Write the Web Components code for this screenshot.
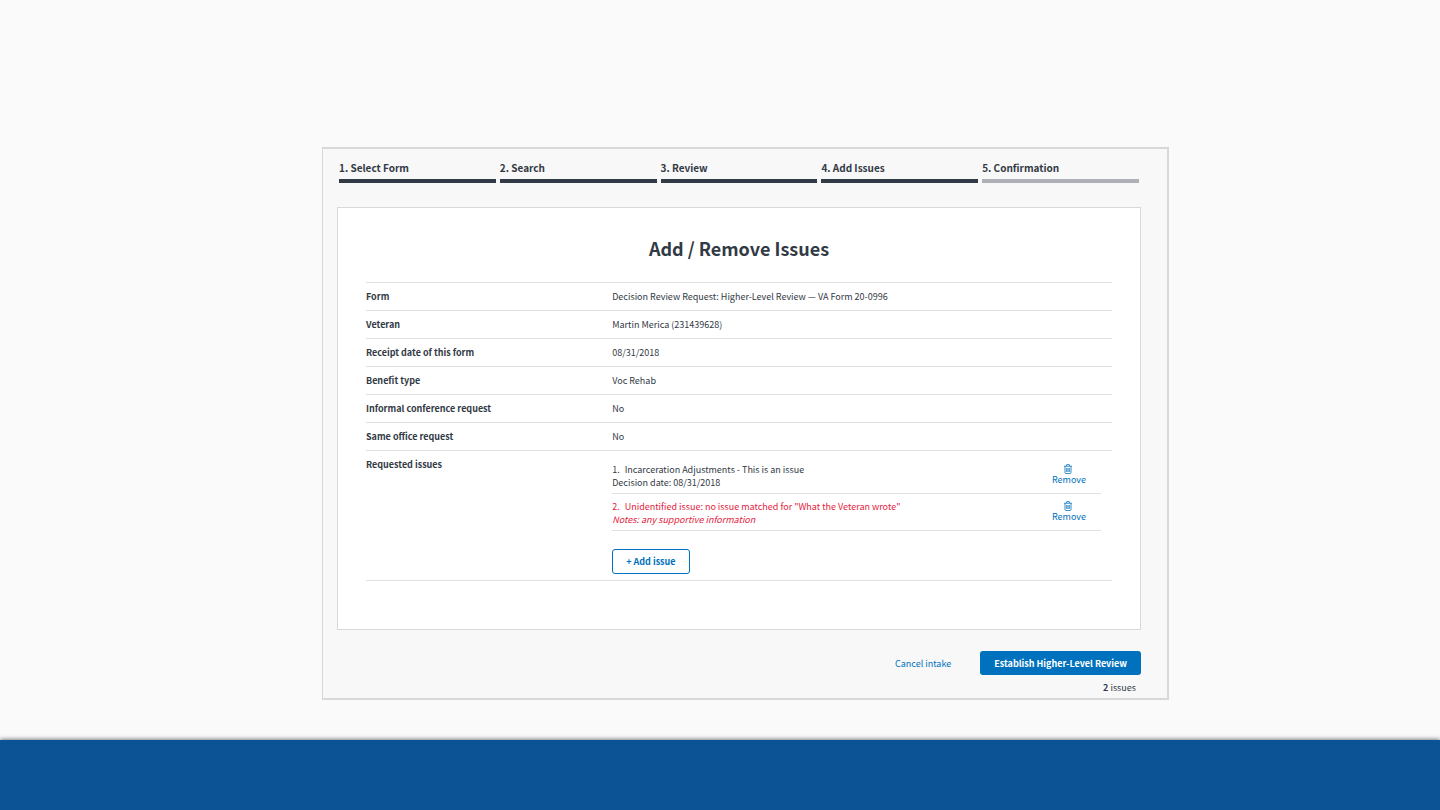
<!DOCTYPE html>
<html lang="en">
<head>
<meta charset="utf-8">
<meta name="viewport" content="width=device-width, initial-scale=1">
<title>Add / Remove Issues</title>
<style>
    body {
        margin: 0;
        background: #fafafa;
        color: #323a45;
        font: 9px/15px "Noto Sans CJK SC", "Open Sans", sans-serif;
        --ink: #323a45;
        --line: #e0e0e0;
        --primary: #0071bc;
        --error: #e31c3d;
    }
</style>
</head>
<body>
<intake-page>
    <intake-steps slot="steps">
        <intake-step done>1. Select Form</intake-step>
        <intake-step done>2. Search</intake-step>
        <intake-step done>3. Review</intake-step>
        <intake-step done>4. Add Issues</intake-step>
        <intake-step>5. Confirmation</intake-step>
    </intake-steps>

    <intake-summary>
        <span slot="title">Add / Remove Issues</span>
        <span slot="form">Decision Review Request: Higher-Level Review — VA Form 20-0996</span>
        <span slot="veteran">Martin Merica (231439628)</span>
        <span slot="receipt">08/31/2018</span>
        <span slot="benefit">Voc Rehab</span>
        <span slot="conference">No</span>
        <span slot="office">No</span>
        <intake-issue slot="issues" number="1">
            Incarceration Adjustments - This is an issue
            <span slot="note">Decision date: 08/31/2018</span>
        </intake-issue>
        <intake-issue slot="issues" number="2" unidentified>
            Unidentified issue: no issue matched for "What the Veteran wrote"
            <span slot="note">Notes: any supportive information</span>
        </intake-issue>
    </intake-summary>

    <intake-actions slot="actions" count="2">Establish Higher-Level Review</intake-actions>
</intake-page>

<script>
(function() {
    class IntakeElement extends HTMLElement {
        constructor() {
            super();
            const template = document.createElement('template');

            template.innerHTML = this.constructor.markup;
            this.attachShadow({ mode: 'open' });
            this.shadowRoot.appendChild(template.content.cloneNode(true));
        }
    }

    class IntakePage extends IntakeElement {
        static get markup() {
            return `
<style>
    :host {
        display: flex;
        flex-direction: column;
        min-height: 100vh;
    }

    main {
        flex: 1;
        display: grid;
        grid-template-columns: 322fr 847fr 271fr;
        align-items: start;
        padding: 147px 0 40px;
    }

    #frame {
        grid-column: 2;
        padding: 11px 26px 3px 14px;
        border: 2px solid #d8d8d8;
        border-left-width: 1px;
        background: #f8f8f8;
    }

    footer {
        height: 70px;
        background: #0c5395;
        box-shadow: 0 -1px 4px rgba(0, 0, 0, .5);
    }
</style>
<main>
    <div id="frame">
        <slot name="steps"></slot>
        <slot></slot>
        <slot name="actions"></slot>
    </div>
</main>
<footer></footer>`;
        }
    }

    class IntakeSteps extends IntakeElement {
        static get markup() {
            return `
<style>
    :host {
        display: block;
        margin: 0 2px 24px;
    }

    nav {
        display: flex;
        gap: 4px;
    }
</style>
<nav aria-label="Progress"><slot></slot></nav>`;
        }
    }

    class IntakeStep extends IntakeElement {
        static get markup() {
            return `
<style>
    :host {
        display: block;
        flex: 1;
        padding-bottom: 4px;
        border-bottom: 4px solid #aeb0b5;
        font-size: 10px;
        font-weight: 700;
    }

    :host([done]) {
        border-color: var(--ink);
    }
</style>
<slot></slot>`;
        }
    }

    class IntakeSummary extends IntakeElement {
        static get markup() {
            return `
<style>
    :host {
        display: block;
        padding: 26px 28px 48px;
        border: 1px solid #d8d8d8;
        background: #fff;
    }

    h1 {
        margin: 0 0 20px;
        font-size: 18px;
        line-height: 28px;
        text-align: center;
    }

    table {
        width: 100%;
        border-spacing: 0;
        border-bottom: 1px solid var(--line);
    }

    th,
    td {
        padding: 6px 0;
        border-top: 1px solid var(--line);
        text-align: left;
        vertical-align: top;
    }

    th {
        width: 33%;
    }

    #issues {
        padding-right: 11px;
    }

    button {
        height: 25px;
        margin-top: 18px;
        padding: 0 13px;
        border: 1px solid var(--primary);
        border-radius: 3px;
        background: #fff;
        color: var(--primary);
        font: inherit;
        font-weight: 700;
        display: block;
        cursor: pointer;
    }
</style>
<h1><slot name="title"></slot></h1>
<table>
    <tr><th scope="row">Form</th><td><slot name="form"></slot></td></tr>
    <tr><th scope="row">Veteran</th><td><slot name="veteran"></slot></td></tr>
    <tr><th scope="row">Receipt date of this form</th><td><slot name="receipt"></slot></td></tr>
    <tr><th scope="row">Benefit type</th><td><slot name="benefit"></slot></td></tr>
    <tr><th scope="row">Informal conference request</th><td><slot name="conference"></slot></td></tr>
    <tr><th scope="row">Same office request</th><td><slot name="office"></slot></td></tr>
    <tr>
        <th scope="row">Requested issues</th>
        <td id="issues">
            <slot name="issues"></slot>
            <button type="button">+ Add issue</button>
        </td>
    </tr>
</table>`;
        }
    }

    class IntakeIssue extends IntakeElement {
        static get markup() {
            return `
<style>
    :host {
        display: flex;
        justify-content: space-between;
        padding: 6px 15px 4px 0;
        border-bottom: 1px solid var(--line);
        line-height: 13px;
    }

    :host([unidentified]) #text {
        color: var(--error);
    }

    :host([unidentified]) #note {
        font-style: italic;
    }

    #number {
        margin-right: 3px;
    }

    button {
        display: flex;
        flex-direction: column;
        align-items: center;
        padding: 1px 0 0;
        border: 0;
        background: none;
        color: var(--primary);
        font: inherit;
        line-height: 12px;
        cursor: pointer;
    }

    svg {
        display: block;
        margin-right: 2px;
    }
</style>
<div id="text">
    <div><span id="number"></span><slot></slot></div>
    <div id="note"><slot name="note"></slot></div>
</div>
<button type="button">
    <svg width="10" height="10" viewBox="0 0 20 20" fill="none" stroke="currentColor" stroke-width="1.6" aria-hidden="true">
        <path d="M2 4.5h16M6.5 4l1-2.8h5l1 2.8M4 5v12.2c0 1 .6 1.8 1.6 1.8h8.8c1 0 1.6-.8 1.6-1.8V5M7.4 8v8M10 8v8M12.6 8v8"/>
    </svg>
    Remove
</button>`;
        }

        connectedCallback() {
            this.shadowRoot.querySelector('#number').textContent = this.getAttribute('number') + '.';
        }
    }

    class IntakeActions extends IntakeElement {
        static get markup() {
            return `
<style>
    :host {
        display: block;
        margin-top: 21px;
    }

    #buttons {
        display: flex;
        justify-content: flex-end;
        gap: 29px;
    }

    button {
        height: 24px;
        padding: 0;
        border: 0;
        background: none;
        color: var(--primary);
        font: inherit;
        cursor: pointer;
    }

    #submit {
        padding: 0 14px;
        border-radius: 3px;
        background: var(--primary);
        color: #fff;
        font-weight: 700;
    }

    #count {
        margin: 5px 5px 0 0;
        text-align: right;
    }
</style>
<div id="buttons">
    <button type="button">Cancel intake</button>
    <button type="submit" id="submit"><slot></slot></button>
</div>
<p id="count"><b></b> issues</p>`;
        }

        connectedCallback() {
            this.shadowRoot.querySelector('b').textContent = this.getAttribute('count');
        }
    }

    window.customElements.define('intake-page', IntakePage);
    window.customElements.define('intake-steps', IntakeSteps);
    window.customElements.define('intake-step', IntakeStep);
    window.customElements.define('intake-summary', IntakeSummary);
    window.customElements.define('intake-issue', IntakeIssue);
    window.customElements.define('intake-actions', IntakeActions);
})();
</script>
</body>
</html>
